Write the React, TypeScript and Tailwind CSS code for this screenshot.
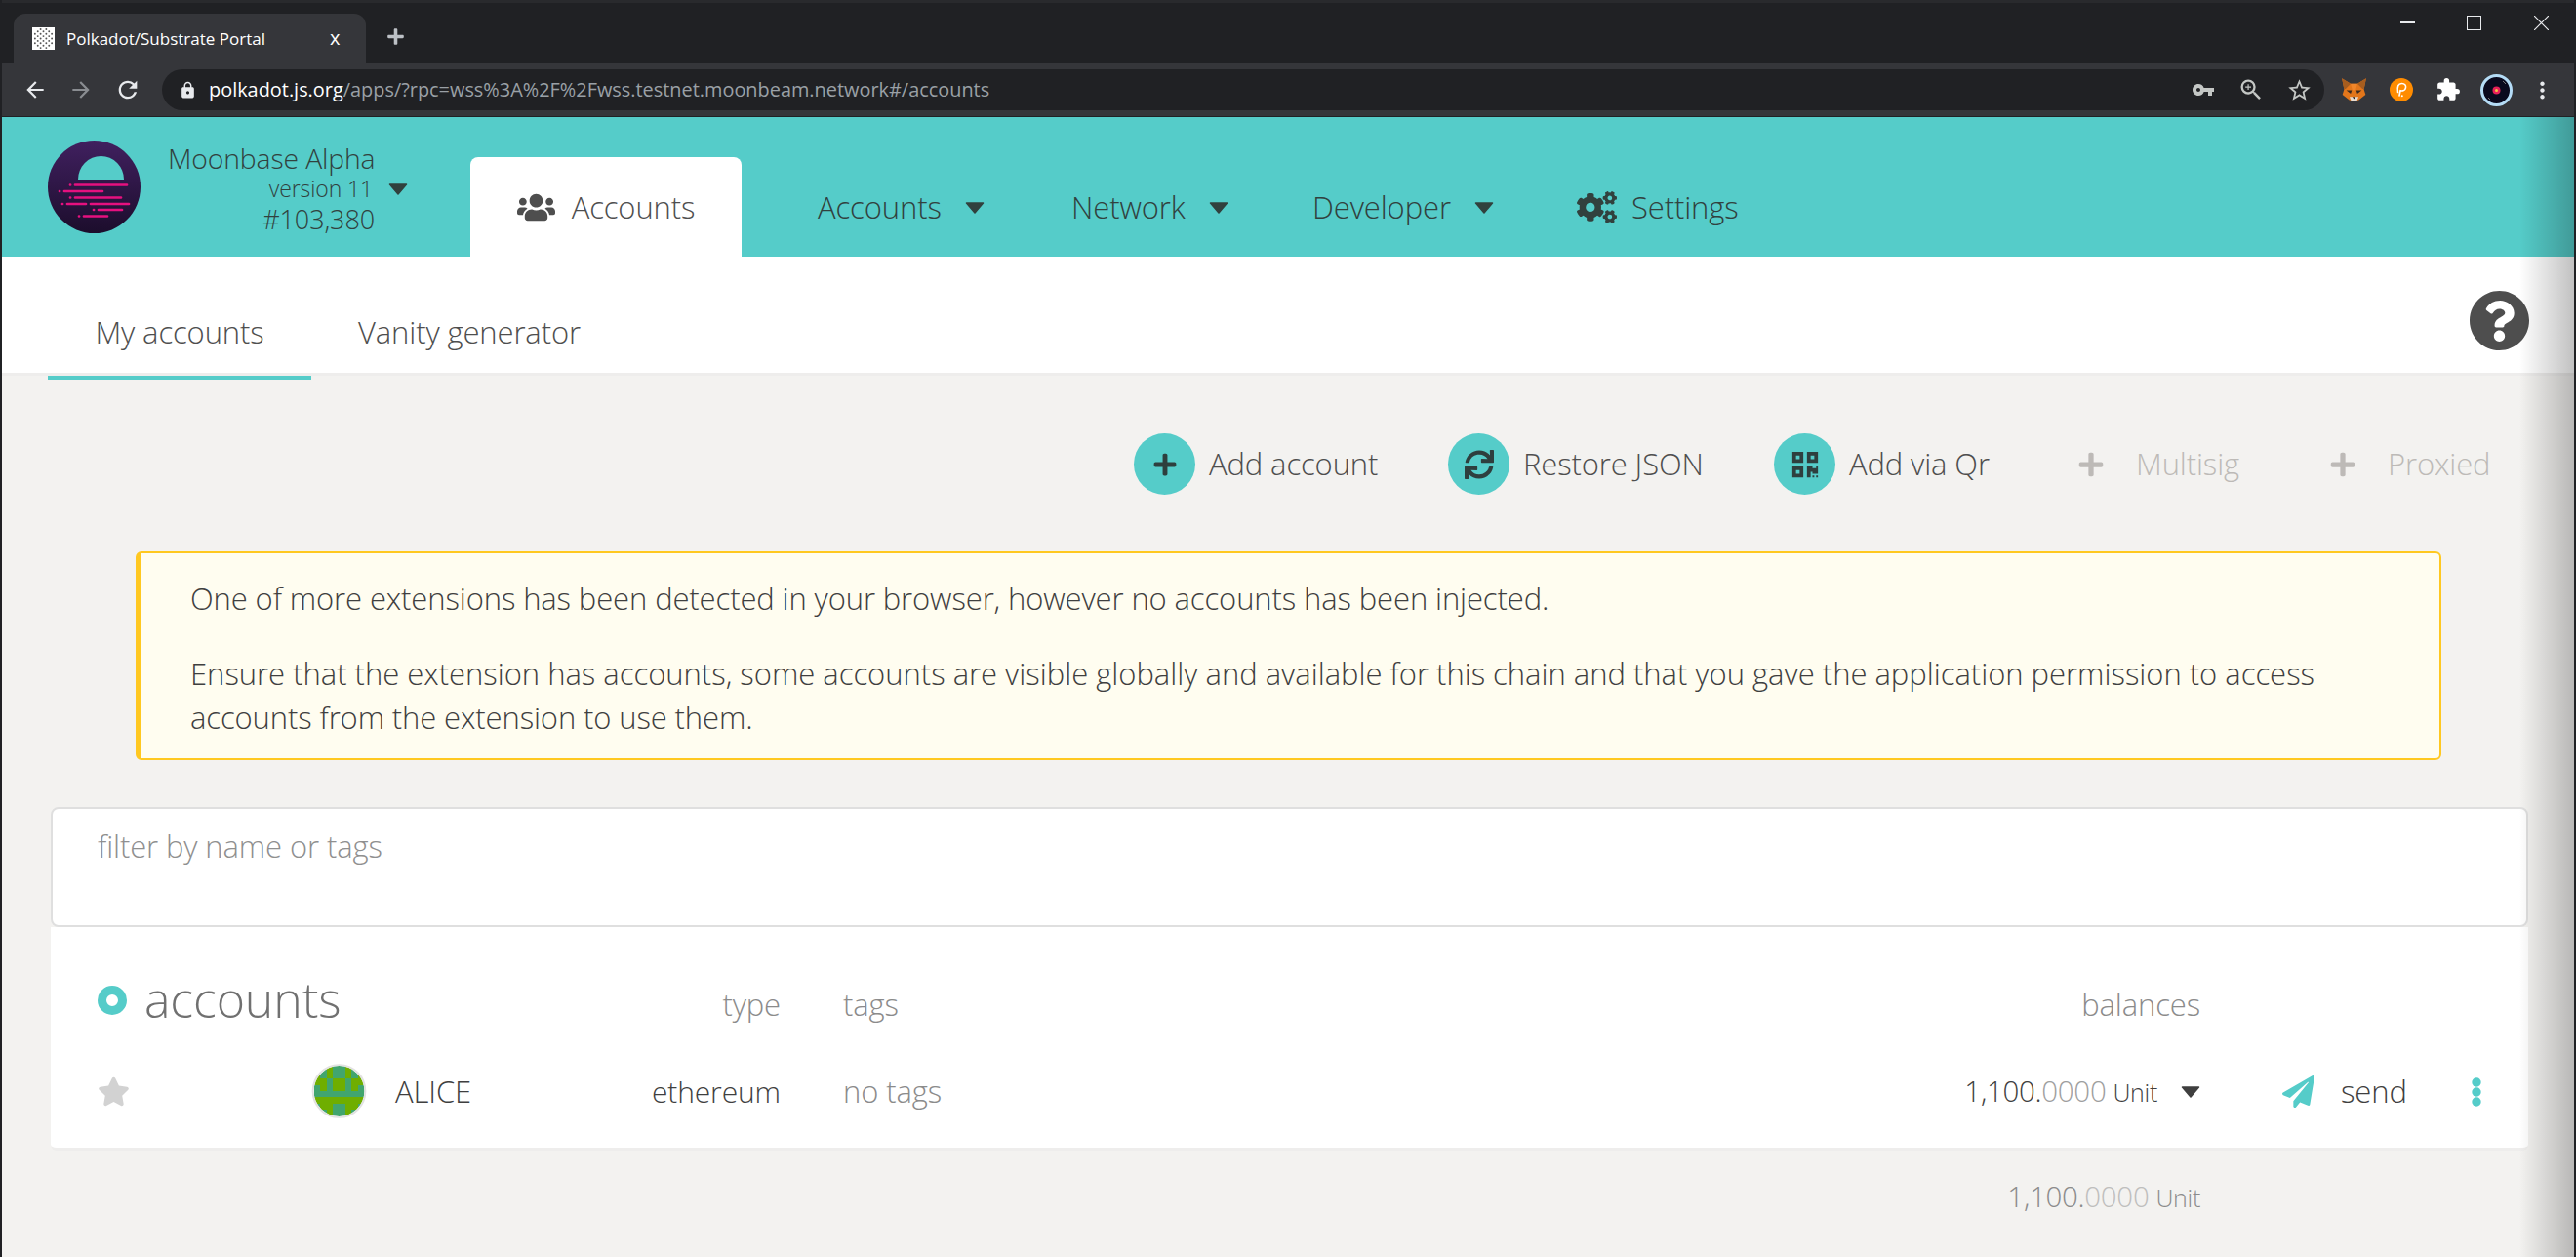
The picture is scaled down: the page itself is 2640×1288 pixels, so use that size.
import React from 'react';
import {
  FaUsers,
  FaCogs,
  FaPlus,
  FaSync,
  FaQrcode,
  FaStar,
  FaPaperPlane,
  FaQuestionCircle,
} from 'react-icons/fa';
import {
  MdArrowBack,
  MdArrowForward,
  MdRefresh,
  MdLock,
  MdVpnKey,
  MdZoomIn,
  MdStarBorder,
  MdExtension,
  MdMoreVert,
} from 'react-icons/md';

const Caret = ({ className }: { className: string }) => (
  <svg viewBox="0 0 20 12" className={`w-[20px] h-[12px] shrink-0 ${className}`}>
    <polygon points="1.5,1 18.5,1 10,11" fill="currentColor" stroke="currentColor" strokeWidth="1.5" strokeLinejoin="round" />
  </svg>
);

const MoonbaseLogo = () => (
  <svg viewBox="19 14 95 95" className="w-[95px] h-[95px] shrink-0">
    <defs>
      <linearGradient id="moon" x1="0" y1="0" x2="0" y2="1">
        <stop offset="0" stopColor="#40205f" />
        <stop offset="1" stopColor="#1c0d2c" />
      </linearGradient>
    </defs>
    <circle cx="66.5" cy="61.5" r="47.5" fill="url(#moon)" />
    <path d="M50 54a23.500 24 0 0 1 47 0z" fill="#55ccc9" />
    <g stroke="#e6107f" strokeWidth="2.700" strokeLinecap="round">
      <path d="M47 59.500H100M36 66H75M47 72.500H94M39 79H58M63 79H102M71 85H95M56 91.500H80" />
      <path d="M42 59.500h.1M31 66h.1M42 72.500h.1M34 79h.1M66 85h.1M51 91.500h.1" />
    </g>
  </svg>
);

const Favicon = () => {
  const dots: React.ReactNode[] = [];
  for (let r = 0; r < 9; r++) {
    for (let c = 0; c < 7; c++) {
      if ((r + c) % 2 === 0 && Math.abs(r - 4) + Math.abs(c - 3) < 7) {
        dots.push(<circle key={`${r}-${c}`} cx={c * 3 + 3} cy={r * 2.500 + 2} r="1" fill={r === 4 && c === 3 ? '#e6007a' : '#555'} />);
      }
    }
  }
  return (
    <svg viewBox="0 0 24 24" className="w-[23px] h-[23px] bg-white shrink-0">
      {dots}
    </svg>
  );
};

const Fox = () => (
  <svg viewBox="0 0 24 24" className="w-[27px] h-[27px]">
    <polygon points="1,1 9,6 15,6 23,1 21,11 22.500,16 16,21 8,21 1.500,16 3,11" fill="#e2761b" />
    <polygon points="1,1 9,6 5,10 3,11" fill="#a65d1f" />
    <polygon points="23,1 15,6 19,10 21,11" fill="#a65d1f" />
    <polygon points="9,6 15,6 13.500,12 10.500,12" fill="#f0862a" />
    <polygon points="5,12 10,12 9,15" fill="#3a2a20" />
    <polygon points="19,12 14,12 15,15" fill="#3a2a20" />
    <polygon points="8,18 16,18 14.500,22 9.500,22" fill="#e8ddd2" />
    <polygon points="10.500,18 13.500,18 12,20" fill="#222" />
  </svg>
);

const PolkadotExt = () => (
  <svg viewBox="0 0 24 24" className="w-[24px] h-[24px]">
    <circle cx="12" cy="12" r="12" fill="#ff8c00" />
    <path d="M8.500 14.500C7.500 8 9 5.500 12.500 5.500c3 0 4.500 2 4 4.300-.5 2.500-3 3.500-5.500 3L10 18" fill="none" stroke="#fff" strokeWidth="1.600" strokeLinecap="round" />
    <circle cx="12.800" cy="18.200" r="1" fill="#fff" />
  </svg>
);

const Avatar = () => (
  <svg viewBox="0 0 33 33" className="w-[33px] h-[33px]">
    <circle cx="16.500" cy="16.500" r="15" fill="#0a0a1e" stroke="#b4dcf6" strokeWidth="3" />
    <path d="M23 7l3 3M8 24l2 2" stroke="#777" strokeWidth="1" />
    <circle cx="16.500" cy="16.500" r="4" fill="#e8205a" />
    <circle cx="16.500" cy="16.500" r="1.500" fill="#f5c542" />
  </svg>
);

const BLOCKS = [
  'LTLTTLTL',
  'LTLTTLTL',
  'LLTLLTLL',
  'TLTLLTLT',
  'TTTTTTTT',
  'LLLLLLLL',
  'TLLTTLLT',
  'LTLTTLTL',
];

const Identicon = () => (
  <svg viewBox="-0.4 -0.4 8.800 8.800" className="w-[57px] h-[58px] shrink-0">
    <defs>
      <clipPath id="blocky">
        <circle cx="4" cy="4" r="4" />
      </clipPath>
    </defs>
    <g clipPath="url(#blocky)" shapeRendering="crispEdges">
      {BLOCKS.map((row, y) =>
        row.split('').map((cell, x) => (
          <rect key={`${x}-${y}`} x={x} y={y} width="1.02" height="1.02" fill={cell === 'T' ? '#41a56e' : '#6fae00'} />
        ))
      )}
    </g>
    <circle cx="4" cy="4" r="4.150" fill="none" stroke="#e2e2e2" strokeWidth="0.3" />
  </svg>
);

const MoreDots = () => (
  <svg viewBox="0 0 10 30" className="w-[10px] h-[30px] ml-[66px] text-[#55ccc9]">
    <circle cx="5" cy="5" r="4.700" fill="currentColor" />
    <circle cx="5" cy="15" r="4.700" fill="currentColor" />
    <circle cx="5" cy="25" r="4.700" fill="currentColor" />
  </svg>
);

const NavItem = ({ label, width }: { label: string; width: string }) => (
  <div className={`flex items-center ${width}`}>
    <span>{label}</span>
    <Caret className="ml-[24px] mt-[2px]" />
  </div>
);

const ActionButton = ({ icon, label, className }: { icon: React.ReactNode; label: string; className: string }) => (
  <div className={`flex items-center ${className}`}>
    <span className="w-[63px] h-[63px] rounded-full bg-[#55ccc9] flex items-center justify-center text-[#2e3f3e]">{icon}</span>
    <span className="ml-[14px]">{label}</span>
  </div>
);

const DisabledButton = ({ label, className }: { label: string; className: string }) => (
  <div className={`flex items-center text-[#bdbab7] ${className}`}>
    <FaPlus size={28} />
    <span className="ml-[32px]">{label}</span>
  </div>
);

const Amount = () => (
  <span className="text-[29.500px] tracking-[-0.3px]">
    1,100.<span className="opacity-50">0000</span>
    <span className="text-[25px] ml-[7px]">Unit</span>
  </span>
);

export default function App() {
  return (
    <div className="relative w-[2640px] h-[1288px] overflow-hidden bg-[#f3f2f0] border-l-2 border-[#202124] text-[#4e4e4e] text-[31px] font-light font-['Open_Sans','Noto_Sans',sans-serif] tracking-[-0.12px]">
      {/* browser chrome */}
      <div className="h-[65px] bg-[#202124] border-t-[3px] border-[#292a2d] flex font-normal tracking-normal">
        <div className="ml-[12px] mt-[11px] w-[361px] h-[51px] rounded-t-[12px] bg-[#35363a] flex items-center pl-[19px] text-white text-[17px]">
          <Favicon />
          <span className="ml-[12px] leading-none">Polkadot/Substrate Portal</span>
          <span className="ml-[66px] text-[20px] leading-none mb-[2px]">x</span>
        </div>
        <span className="ml-[21px] mt-[25px] h-[22px] text-[#bdc1c6]">
          <FaPlus size={19} />
        </span>
        <div className="ml-auto flex items-start text-[#e8eaed] pr-[28px] pt-[13px]">
          <span className="w-[15px] h-[2px] bg-[#e8eaed] mt-[6px]" />
          <span className="ml-[53px] w-[15px] h-[15px] border-[1.500px] border-[#e8eaed]" />
          <svg viewBox="0 0 15 15" className="ml-[54px] w-[15px] h-[15px]">
            <path d="M0 0L15 15M15 0L0 15" stroke="#e8eaed" strokeWidth="1.200" />
          </svg>
        </div>
      </div>
      <div className="h-[55px] bg-[#35363a] border-b border-[#202124] flex items-center font-normal tracking-normal">
        <MdArrowBack size={26} className="ml-[21px] text-[#e8eaed]" />
        <MdArrowForward size={26} className="ml-[21px] text-[#8a8d91]" />
        <MdRefresh size={28} className="ml-[21px] text-[#e8eaed]" />
        <div className="ml-[21px] w-[2216px] h-[42px] rounded-full bg-[#202124] flex items-center text-[19.900px] text-[#9aa0a6]">
          <MdLock size={19} className="ml-[17px] text-[#e8eaed]" />
          <span className="ml-[12px]">
            <span className="text-white">polkadot.js.org</span>/apps/?rpc=wss%3A%2F%2Fwss.testnet.moonbeam.network#/accounts
          </span>
          <div className="ml-auto flex items-center text-[#c4c7c5] pr-[12px]">
            <MdVpnKey size={24} />
            <MdZoomIn size={28} className="ml-[23px]" />
            <MdStarBorder size={27} className="ml-[22px]" />
          </div>
        </div>
        <div className="flex items-center ml-[17px]">
          <Fox />
          <span className="ml-[23px]">
            <PolkadotExt />
          </span>
          <MdExtension size={26} className="ml-[23px] text-white" />
          <span className="ml-[20px]">
            <Avatar />
          </span>
          <MdMoreVert size={27} className="ml-[17px] text-[#e8eaed]" />
        </div>
      </div>

      {/* app header */}
      <div className="h-[143px] bg-[#55ccc9] flex text-[#31413e]">
        <div className="ml-[47px] mt-[24px]">
          <MoonbaseLogo />
        </div>
        <div className="ml-[28px] w-[246px] pr-[34px] text-right text-[27px] leading-[31px] pt-[27px] whitespace-nowrap">
          <div className="text-[28.300px]">Moonbase Alpha</div>
          <div className="flex justify-end items-center text-[23px] leading-[29px] -mr-[34px] mt-[1px]">
            <span>version 11</span>
            <Caret className="ml-[16px] w-[18px] h-[11px]" />
          </div>
          <div className="mt-[1px]">#103,380</div>
        </div>
        <div className="ml-[64px] mt-[41px] w-[278px] h-[102px] bg-white rounded-t-[8px] flex items-center justify-center text-[#4e4e4e]">
          <FaUsers size={39} />
          <span className="ml-[17px]">Accounts</span>
        </div>
        <div className="ml-[78px] mt-[41px] h-[102px] flex items-center whitespace-nowrap">
          <NavItem label="Accounts" width="w-[260px]" />
          <NavItem label="Network" width="w-[247px]" />
          <NavItem label="Developer" width="w-[271px]" />
          <FaCogs size={41} />
          <span className="ml-[15px]">Settings</span>
        </div>
      </div>

      {/* sub navigation */}
      <div className="h-[122px] bg-white border-b-[3px] border-[#eeedec] flex justify-between">
        <div className="flex ml-[47px] h-[126px]">
          <div className="w-[270px] h-[126px] border-b-4 border-[#55ccc9] flex items-center justify-center pt-[33px]">My accounts</div>
          <div className="ml-[48px] h-[126px] flex items-center pt-[29px]">Vanity generator</div>
        </div>
        <FaQuestionCircle size={63} className="mt-[34px] mr-[47px]" />
      </div>

      {/* actions */}
      <div className="mt-[59px] h-[63px] flex items-center pl-[1160px] whitespace-nowrap">
        <ActionButton icon={<FaPlus size={26} />} label="Add account" className="w-[322px]" />
        <ActionButton icon={<FaSync size={30} />} label="Restore JSON" className="w-[334px]" />
        <ActionButton icon={<FaQrcode size={30} />} label="Add via Qr" className="w-[311px]" />
        <DisabledButton label="Multisig" className="w-[258px]" />
        <DisabledButton label="Proxied" className="" />
      </div>

      {/* extension warning */}
      <div className="ml-[137px] mt-[58px] w-[2363px] h-[214px] bg-[#fffdf0] border-2 border-l-[6px] border-[#ffc820] rounded-[6px] pl-[50px] pt-[24px] leading-[45px] text-[#3f3f3f]">
        <p>One of more extensions has been detected in your browser, however no accounts has been injected.</p>
        <p className="mt-[32px]">
          <span className="tracking-[-0.02px]">
            Ensure that the extension has accounts, some accounts are visible globally and available for this chain and that you gave the application permission to access
          </span>
          <br />
          accounts from the extension to use them.
        </p>
      </div>

      {/* filter */}
      <div className="ml-[50px] mt-[48px] w-[2539px] h-[123px] bg-white border-2 border-[#dfdfdf] rounded-[8px] pl-[46px] pt-[15px]">
        <input
          readOnly
          placeholder="filter by name or tags"
          className="w-full leading-[40px] outline-none font-light placeholder:text-[#8f8f8f]"
        />
      </div>

      {/* accounts table */}
      <div className="ml-[50px] w-[2539px] h-[229px] bg-white border-b-[3px] border-[#eeedec] rounded-b-[6px]">
        <div className="h-[111px] flex text-[#8b8b8b] whitespace-nowrap">
          <div className="w-[560px] pl-[48px] pt-[40px] flex items-center h-[110px] text-[#707070] text-[50px] font-light">
            <span className="w-[30px] h-[30px] rounded-full border-[9px] border-[#55ccc9] bg-white shrink-0" />
            <span className="ml-[18px] leading-none mb-[3px]">accounts</span>
          </div>
          <div className="w-[188px] text-right pt-[59px] leading-[40px]">type</div>
          <div className="ml-[64px] pt-[59px] leading-[40px]">tags</div>
          <div className="ml-auto mr-[336px] pt-[59px] leading-[40px]">balances</div>
        </div>
        <div className="h-[115px] flex items-center whitespace-nowrap">
          <FaStar size={33} className="ml-[48px] text-[#d2d2d2] shrink-0" />
          <div className="ml-[186px] mb-[2px]">
            <Identicon />
          </div>
          <span className="ml-[29px] w-[128px] text-[#3f3f3f]">ALICE</span>
          <span className="ml-[100px] w-[167px] text-right text-[#3f3f3f] text-[30px]">ethereum</span>
          <span className="ml-[64px] text-[#8b8b8b]">no tags</span>
          <div className="ml-auto flex items-center text-[#3f3f3f]">
            <Amount />
            <Caret className="ml-[24px]" />
          </div>
          <div className="w-[336px] flex items-center pl-[84px] shrink-0 text-[#3f3f3f]">
            <FaPaperPlane size={33} className="text-[#55ccc9]" />
            <span className="ml-[27px]">send</span>
            <MoreDots />
          </div>
        </div>
      </div>

      {/* total */}
      <div className="w-[2253px] text-right mt-[26px] leading-[40px] text-[#8b8b8b]">
        <Amount />
      </div>

      {/* window edge shadow */}
      <div className="absolute right-0 top-[120px] bottom-0 w-[58px] bg-gradient-to-r from-transparent to-[#00000040]" />
      <div className="absolute right-0 top-0 bottom-0 w-[2px] bg-[#202124]" />
    </div>
  );
}
